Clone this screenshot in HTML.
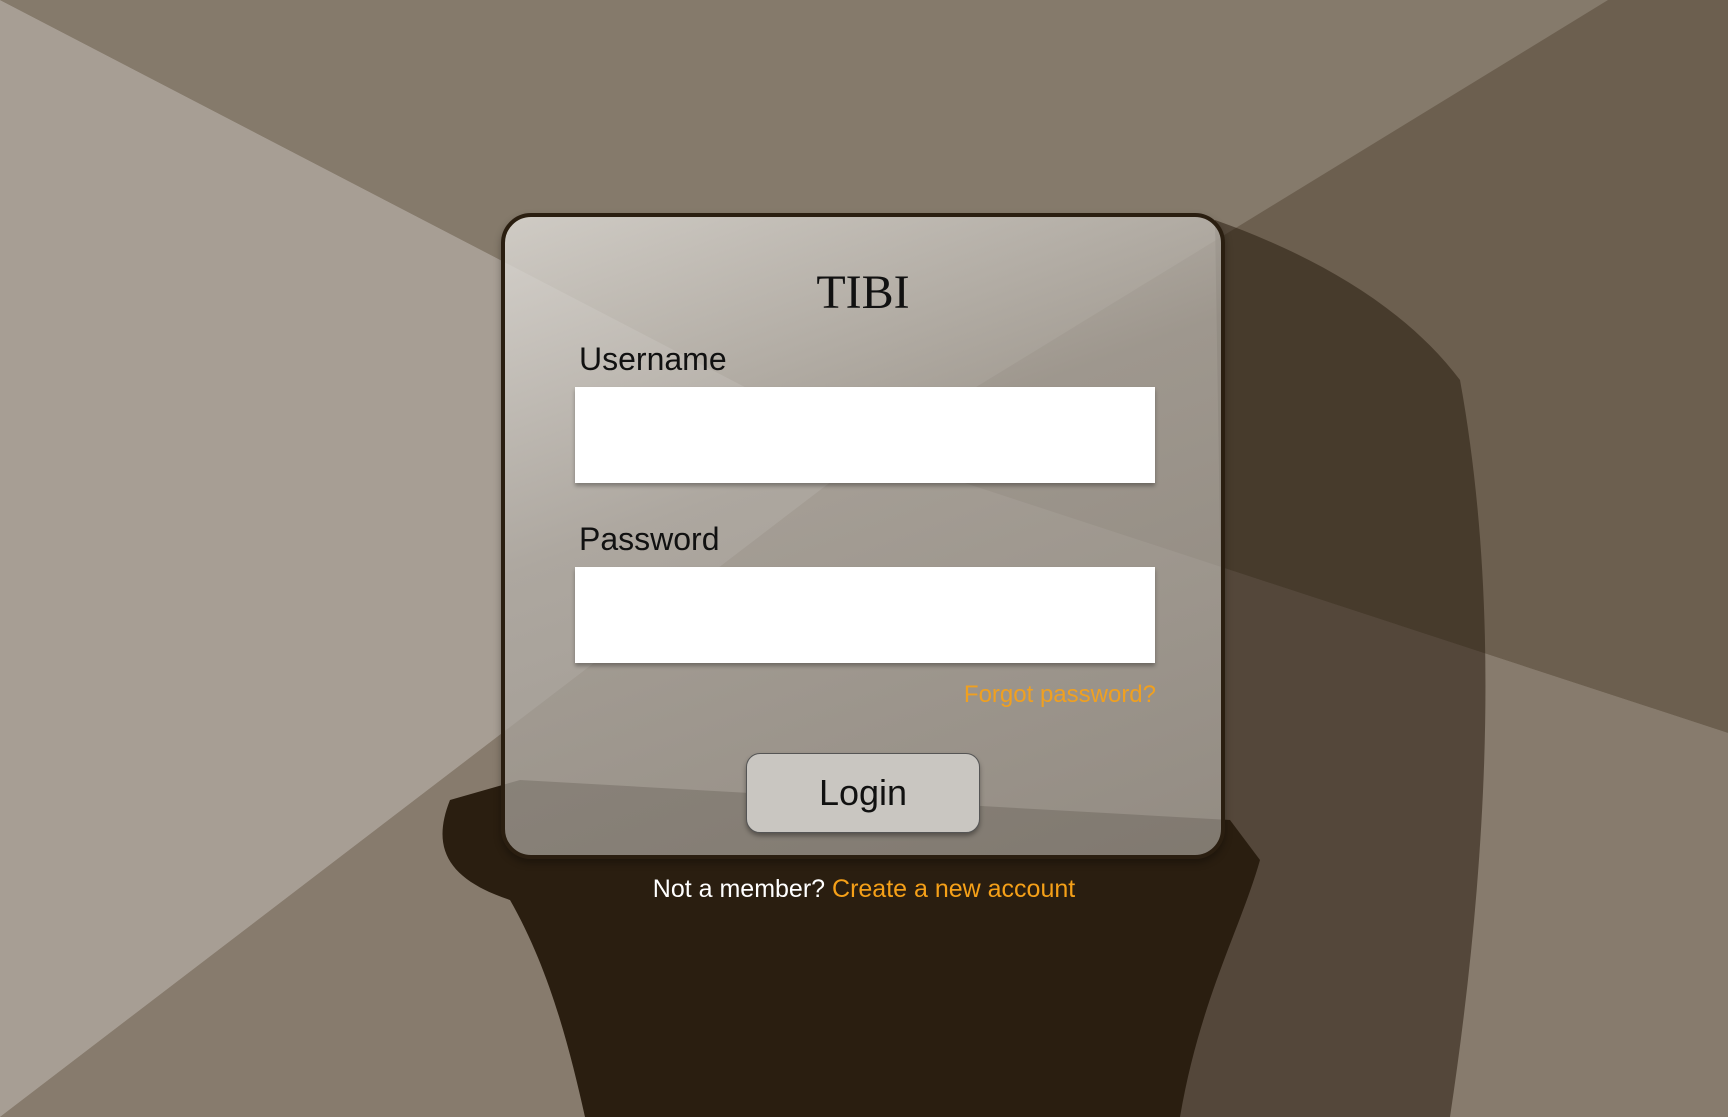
<!DOCTYPE html>
<html><head><meta charset="utf-8"><style>
html,body{margin:0;padding:0;width:1728px;height:1117px;overflow:hidden;font-family:"Liberation Sans",sans-serif;}
.bg{position:absolute;left:0;top:0}
.card{position:absolute;left:501px;top:213px;width:716px;height:638px;border:4px solid #2a1e10;border-radius:30px;background:linear-gradient(160deg,rgba(220,217,212,0.85) 0%,rgba(175,170,163,0.75) 40%,rgba(150,144,136,0.8) 100%);box-shadow:0 4px 8px rgba(0,0,0,0.3);}
.title{position:absolute;left:0;width:100%;top:48px;text-align:center;font-family:"Liberation Serif",serif;font-size:48px;color:#111;}
.lbl{position:absolute;left:74px;font-size:32px;color:#111;}
.inp{position:absolute;left:70px;width:580px;height:96px;background:#fff;box-shadow:0 3px 4px rgba(0,0,0,0.3);}
.forgot{position:absolute;right:65px;top:464px;font-size:24px;color:#f0a020;}
.btn{position:absolute;left:241px;top:536px;width:234px;height:80px;background:#c9c6c1;border:1px solid #555;border-radius:14px;box-shadow:0 3px 5px rgba(0,0,0,0.35);text-align:center;line-height:78px;font-size:36px;color:#111;box-sizing:border-box;}
.foot{position:absolute;left:0;width:1728px;top:875px;text-align:center;font-size:25px;color:#fff;}
.foot span{color:#f5a018;}
</style></head><body>
<svg class="bg" width="1728" height="1117" viewBox="0 0 1728 1117">
<rect width="1728" height="1117" fill="#877b6d"/>
<polygon points="0,0 870,452 0,1117" fill="#a79e94"/>
<polygon points="0,0 1608,0 870,452" fill="#857a6b"/>
<polygon points="1608,0 1728,0 1728,733 870,452" fill="#6c5f4f"/>
<polygon points="0,1117 870,452 1728,733 1728,1117" fill="#877b6d"/>
<path d="M1215,220 C1300,250 1400,300 1460,380 C1500,600 1490,850 1450,1117 L1150,1117 L1225,850 Z" fill="rgba(42,30,16,0.55)"/>
<path d="M450,800 C430,850 450,880 510,900 C550,970 570,1050 585,1117 L1180,1117 C1200,1000 1240,930 1260,860 L1230,820 L520,780 Z" fill="#2a1e10"/>
</svg>
<div class="card">
<div class="title">TIBI</div>
<div class="lbl" style="top:124px">Username</div>
<div class="inp" style="top:170px"></div>
<div class="lbl" style="top:304px">Password</div>
<div class="inp" style="top:350px"></div>
<div class="forgot">Forgot password?</div>
<div class="btn">Login</div>
</div>
<div class="foot">Not a member? <span>Create a new account</span></div>
</body></html>
